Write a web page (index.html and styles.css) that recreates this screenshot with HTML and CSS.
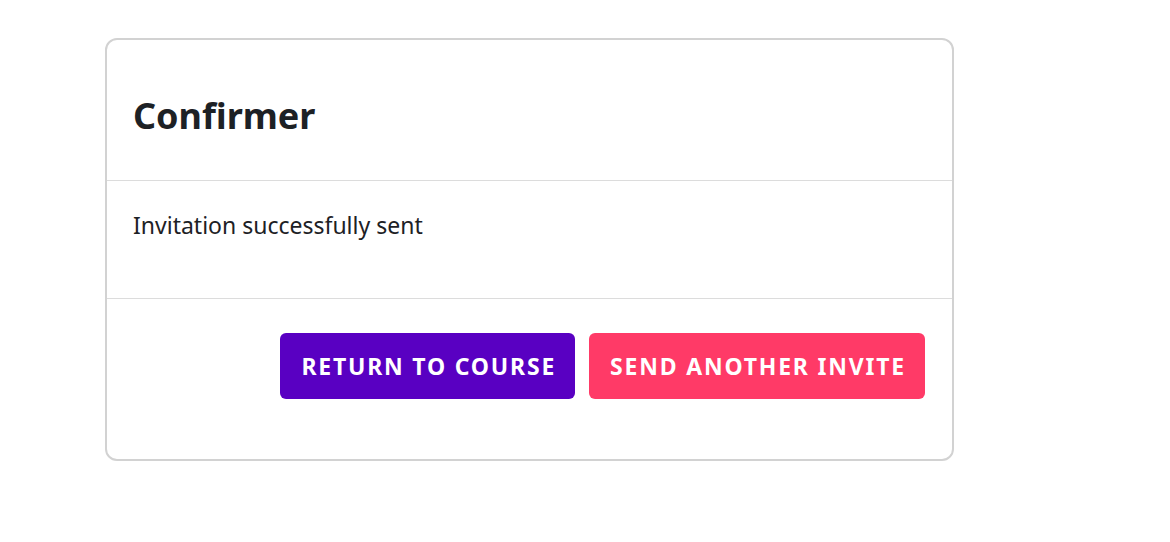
FILE: index.html
```html
<!DOCTYPE html>
<html>
<head>
<meta charset="utf-8">
<link rel="stylesheet" href="styles.css">
</head>
<body>
<div class="page">
  <div class="card">
    <div class="card-header"><h1 class="title">Confirmer</h1></div>
    <div class="card-body"><p class="message">Invitation successfully sent</p></div>
    <div class="card-footer">
      <button class="btn btn-primary">RETURN TO COURSE</button>
      <button class="btn btn-secondary">SEND ANOTHER INVITE</button>
    </div>
  </div>
</div>
</body>
</html>
```
FILE: styles.css
```css
html, body {
  margin: 0;
  padding: 0;
  background: #fff;
}
body {
  font-family: "Noto Sans", "Open Sans", sans-serif;
  color: #1d2125;
}
.page {
  padding: 38px 0 0 105px;
}
.card {
  width: 845px;
  border: 2px solid #d2d2d2;
  border-radius: 12px;
}
.card-header {
  padding: 52px 26px 40px;
  border-bottom: 1px solid #dcdcdc;
}
.title {
  margin: 0;
  font-size: 36px;
  line-height: 48px;
  font-weight: 700;
}
.card-body {
  padding: 28px 26px 57px;
  border-bottom: 1px solid #dcdcdc;
}
.message {
  margin: 0;
  font-size: 23px;
  line-height: 32px;
}
.card-footer {
  display: flex;
  justify-content: flex-end;
  gap: 14px;
  padding: 34px 27px 60px 26px;
}
.btn {
  border: none;
  border-radius: 6px;
  height: 66px;
  padding: 0 19px 0 21px;
  font-family: "Noto Sans", sans-serif;
  font-weight: 700;
  font-size: 23px;
  letter-spacing: 1.8px;
  color: #fff;
}
.btn-primary { background: #5900c2; }
.btn-secondary { background: #ff3a67; }
```
